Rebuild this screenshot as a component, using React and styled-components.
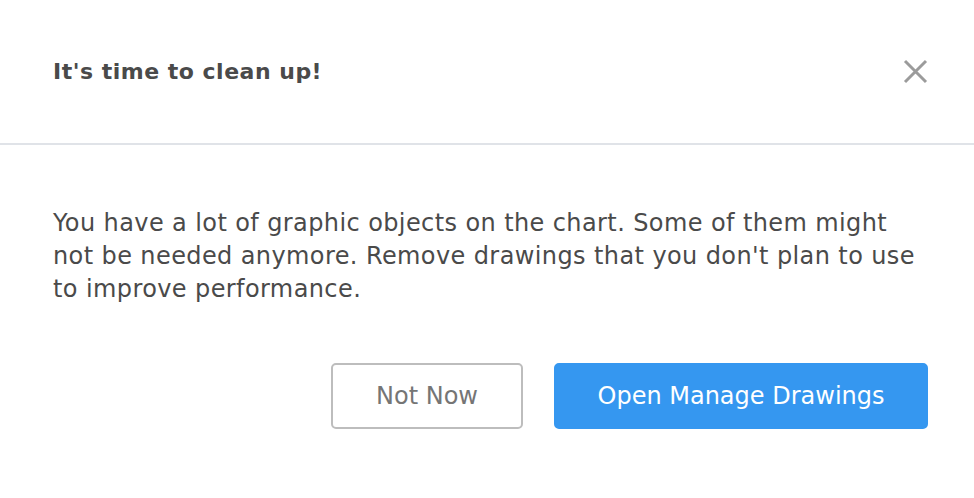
import React from "react";
import styled, { createGlobalStyle } from "styled-components";

const Global_Style = createGlobalStyle`
  html, body {
    margin: 0;
    padding: 0;
    background: #ffffff;
  }
  body {
    font-family: "DejaVu Sans", "Liberation Sans", sans-serif;
  }
`;

const Styled_Dialog = styled.div`
  width: 974px;
  height: 498px;
  background: #ffffff;
  display: flex;
  flex-direction: column;
`;

const Styled_Header = styled.div`
  height: 145px;
  display: flex;
  align-items: center;
  justify-content: space-between;
  padding: 0 46px 0 53px;
  border-bottom: 2px solid #e0e3e8;
  box-sizing: border-box;
`;

const Styled_Title = styled.h1`
  margin: 0;
  font-size: 22px;
  font-weight: 700;
  letter-spacing: 0.5px;
  color: #4a4a4a;
  line-height: 33px;
`;

const Styled_Close = styled.button`
  width: 25px;
  height: 25px;
  padding: 0;
  border: none;
  background: none;
  cursor: pointer;
  display: flex;
  align-items: center;
  justify-content: center;
`;

const Styled_Body = styled.div`
  padding: 62px 46px 0 53px;
`;

const Styled_Text = styled.p`
  margin: 0;
  max-width: 872px;
  font-size: 24px;
  letter-spacing: 0.4px;
  line-height: 33px;
  color: #4a4a4a;
`;

const Styled_Actions = styled.div`
  display: flex;
  justify-content: flex-end;
  gap: 31px;
  margin-top: 57px;
`;

const Styled_Button = styled.button`
  height: 66px;
  padding: 0 30px;
  border-radius: 5px;
  font-family: inherit;
  font-size: 24px;
  cursor: pointer;
  border: 2px solid ${({ primary }) => (primary ? "#3597f0" : "#bdbdbd")};
  background: ${({ primary }) => (primary ? "#3597f0" : "#ffffff")};
  color: ${({ primary }) => (primary ? "#ffffff" : "#757575")};
  min-width: ${({ primary }) => (primary ? "374px" : "192px")};
`;

const Close_Icon = () => (
  <svg width="25" height="25" viewBox="0 0 25 25">
    <path d="M2 2 L23 23 M23 2 L2 23" stroke="#9b9b9b" strokeWidth="3" />
  </svg>
);

const App = () => (
  <>
    <Global_Style />
    <Styled_Dialog>
      <Styled_Header>
        <Styled_Title>It's time to clean up!</Styled_Title>
        <Styled_Close aria-label="close">
          <Close_Icon />
        </Styled_Close>
      </Styled_Header>
      <Styled_Body>
        <Styled_Text>
          You have a lot of graphic objects on the chart. Some of them might
          not be needed anymore. Remove drawings that you don't plan to use
          to improve performance.
        </Styled_Text>
        <Styled_Actions>
          <Styled_Button>Not Now</Styled_Button>
          <Styled_Button primary>Open Manage Drawings</Styled_Button>
        </Styled_Actions>
      </Styled_Body>
    </Styled_Dialog>
  </>
);

export default App;
